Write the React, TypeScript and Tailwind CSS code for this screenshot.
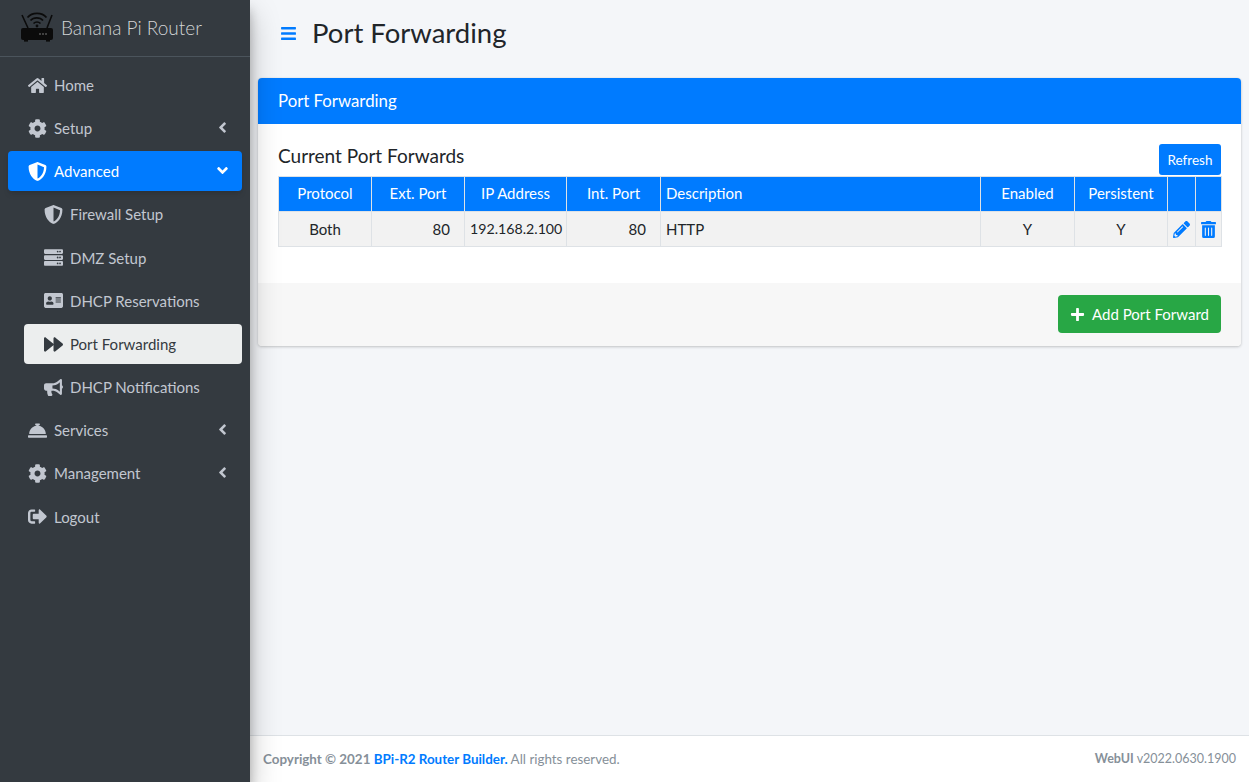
import React from 'react';
import {
  FaHome,
  FaCog,
  FaShieldAlt,
  FaServer,
  FaAddressCard,
  FaForward,
  FaBullhorn,
  FaConciergeBell,
  FaSignOutAlt,
  FaBars,
  FaPencilAlt,
  FaTrashAlt,
  FaPlus,
  FaAngleLeft,
  FaAngleDown,
} from 'react-icons/fa';

const RouterLogo = () => (
  <svg width="33" height="31" viewBox="0 0 33 31" className="shrink-0">
    <rect x="1" y="17" width="32" height="12" rx="2" fill="#0b0b0b" />
    <rect x="4" y="29" width="4" height="1.6" fill="#0b0b0b" />
    <rect x="26" y="29" width="4" height="1.6" fill="#0b0b0b" />
    <path d="M2 4l6 13M32 4l-5 13" stroke="#0b0b0b" strokeWidth="1.6" fill="none" />
    <path d="M7.5 6.5C12 1 22 1 26.5 6.5M10.5 9.5C13.5 6 20 6 23 9.5M13.5 12.5C15.5 10.5 18.5 10.5 20.5 12.5" stroke="#0b0b0b" strokeWidth="1.7" fill="none" />
    <circle cx="17" cy="15" r="1.4" fill="#0b0b0b" />
    <circle cx="20" cy="23" r="1" fill="#555" />
    <circle cx="23" cy="23" r="1" fill="#555" />
    <circle cx="26" cy="23" r="1" fill="#555" />
  </svg>
);

const TopItem = ({ icon, label, arrow, active }: { icon: React.ReactNode; label: string; arrow?: 'left' | 'down'; active?: boolean }) => (
  <div className={`mx-2 mb-[3.2px] flex h-10 items-center rounded pl-5 pr-[11px] ${active ? 'bg-[#007bff] text-white shadow-md' : 'text-[#c2c7d0]'}`}>
    <span className="flex w-[26px] shrink-0 items-center text-[19px]">{icon}</span>
    <span className="flex-1">{label}</span>
    {arrow === 'left' && <FaAngleLeft className="mb-[2px] text-[17px]" />}
    {arrow === 'down' && <FaAngleDown className="mb-[2px] text-[17px]" />}
  </div>
);

const SubItem = ({ icon, label, active }: { icon: React.ReactNode; label: string; active?: boolean }) => (
  <div className={`mb-[3.2px] ml-6 mr-2 flex h-10 items-center rounded pl-5 ${active ? 'bg-[#eceeee] text-[#343a40]' : 'text-[#c2c7d0]'}`}>
    <span className="flex w-[26px] shrink-0 items-center text-[19px]">{icon}</span>
    <span>{label}</span>
  </div>
);

const columns = [
  { label: 'Protocol', width: 'w-[93px]' },
  { label: 'Ext. Port', width: 'w-[93px]' },
  { label: 'IP Address', width: 'w-[102px]' },
  { label: 'Int. Port', width: 'w-[94px]' },
  { label: 'Description', width: 'w-[320px]', left: true },
  { label: 'Enabled', width: 'w-[94px]' },
  { label: 'Persistent', width: 'w-[93px]' },
  { label: '', width: 'w-[28px]' },
  { label: '', width: 'w-[26px]' },
];

const tdClass = 'h-[35px] border border-[#dee2e6] px-[5px] py-0';

const App: React.FC = () => {
  return (
    <div className="flex h-screen w-full overflow-hidden bg-[#f4f6f9] font-['Lato','Liberation_Sans',sans-serif] text-[15px] text-[#212529]">
      {/* sidebar */}
      <aside className="z-10 h-full w-[250px] shrink-0 bg-[#343a40] shadow-[0_14px_28px_rgba(0,0,0,0.25),0_10px_10px_rgba(0,0,0,0.22)]">
        <div className="flex h-[57px] items-center gap-2 border-b border-[#4b545c] pb-[3px] pl-5">
          <RouterLogo />
          <span className="mt-[3px] text-[19px] font-light text-[#d2d4d6]">Banana Pi Router</span>
        </div>
        <nav className="mt-2">
          <TopItem icon={<FaHome />} label="Home" />
          <TopItem icon={<FaCog />} label="Setup" arrow="left" />
          <TopItem icon={<FaShieldAlt />} label="Advanced" arrow="down" active />
          <SubItem icon={<FaShieldAlt />} label="Firewall Setup" />
          <SubItem icon={<FaServer />} label="DMZ Setup" />
          <SubItem icon={<FaAddressCard />} label="DHCP Reservations" />
          <SubItem icon={<FaForward />} label="Port Forwarding" active />
          <SubItem icon={<FaBullhorn />} label="DHCP Notifications" />
          <TopItem icon={<FaConciergeBell />} label="Services" arrow="left" />
          <TopItem icon={<FaCog />} label="Management" arrow="left" />
          <TopItem icon={<FaSignOutAlt />} label="Logout" />
        </nav>
      </aside>

      {/* main */}
      <div className="flex h-full min-w-0 flex-1 flex-col">
        <div className="flex-1 px-2">
          <header className="mb-[11px] flex h-[67px] items-center gap-[15px] pl-[22px]">
            <FaBars className="text-[17px] text-[#007bff]" />
            <h1 className="mb-[2px] text-[27.5px] text-[#212529]">Port Forwarding</h1>
          </header>

          <section className="overflow-hidden rounded bg-white shadow-[0_0_1px_rgba(0,0,0,0.125),0_1px_3px_rgba(0,0,0,0.2)]">
            <div className="flex h-[46px] items-center bg-[#007bff] px-5 text-[16.8px] text-white">Port Forwarding</div>

            <div className="px-5 pt-5 pb-9">
              <div className="flex h-[33px] items-start justify-between">
                <h2 className="-mt-[2px] text-[19px] text-[#212529]">Current Port Forwards</h2>
                <button className="flex h-[31px] w-[62px] items-center justify-center rounded-[3px] bg-[#007bff] pt-[2px] text-[13.5px] text-white">Refresh</button>
              </div>
              <table className="-mt-[1px] w-[943px] table-fixed border-collapse">
                <thead>
                  <tr className="bg-[#007bff] text-white">
                    {columns.map((c, i) => (
                      <th key={i} className={`${c.width} h-[35px] border border-[#dee2e6] px-[5px] pt-0 pb-[2px] font-normal ${c.left ? 'text-left' : 'text-center'}`}>
                        {c.label}
                      </th>
                    ))}
                  </tr>
                </thead>
                <tbody>
                  <tr className="bg-[#f2f2f2]">
                    <td className={`${tdClass} text-center`}>Both</td>
                    <td className={`${tdClass} pr-[14px] text-right`}>80</td>
                    <td className={`${tdClass} whitespace-nowrap text-center text-[14.2px]`}>192.168.2.100</td>
                    <td className={`${tdClass} pr-[14px] text-right`}>80</td>
                    <td className={tdClass}>HTTP</td>
                    <td className={`${tdClass} text-center`}>Y</td>
                    <td className={`${tdClass} text-center`}>Y</td>
                    <td className={`${tdClass} !px-0`}>
                      <FaPencilAlt className="mx-auto text-[17px] text-[#007bff]" />
                    </td>
                    <td className={`${tdClass} !px-0`}>
                      <FaTrashAlt className="mx-auto mr-[4px] text-[17px] text-[#007bff]" />
                    </td>
                  </tr>
                </tbody>
              </table>
            </div>

            <div className="flex h-[63px] items-start justify-end bg-[#f7f7f7] px-5 pt-3">
              <button className="flex h-[38px] w-[163px] items-center justify-center gap-[7px] rounded bg-[#28a745] text-white">
                <FaPlus className="text-[15px]" />
                Add Port Forward
              </button>
            </div>
          </section>
        </div>

        <footer className="flex h-[47px] shrink-0 items-center justify-between border-t border-[#dee2e6] bg-white px-[13px] pt-[1px] text-[13.4px] text-[#869099]">
          <span>
            <strong className="font-bold">
              Copyright © 2021 <span className="text-[#007bff]">BPi-R2 Router Builder.</span>
            </strong>{' '}
            All rights reserved.
          </span>
          <span className="text-[12.5px]">
            <strong className="font-bold">WebUI</strong> v2022.0630.1900
          </span>
        </footer>
      </div>
    </div>
  );
};

export default App;
